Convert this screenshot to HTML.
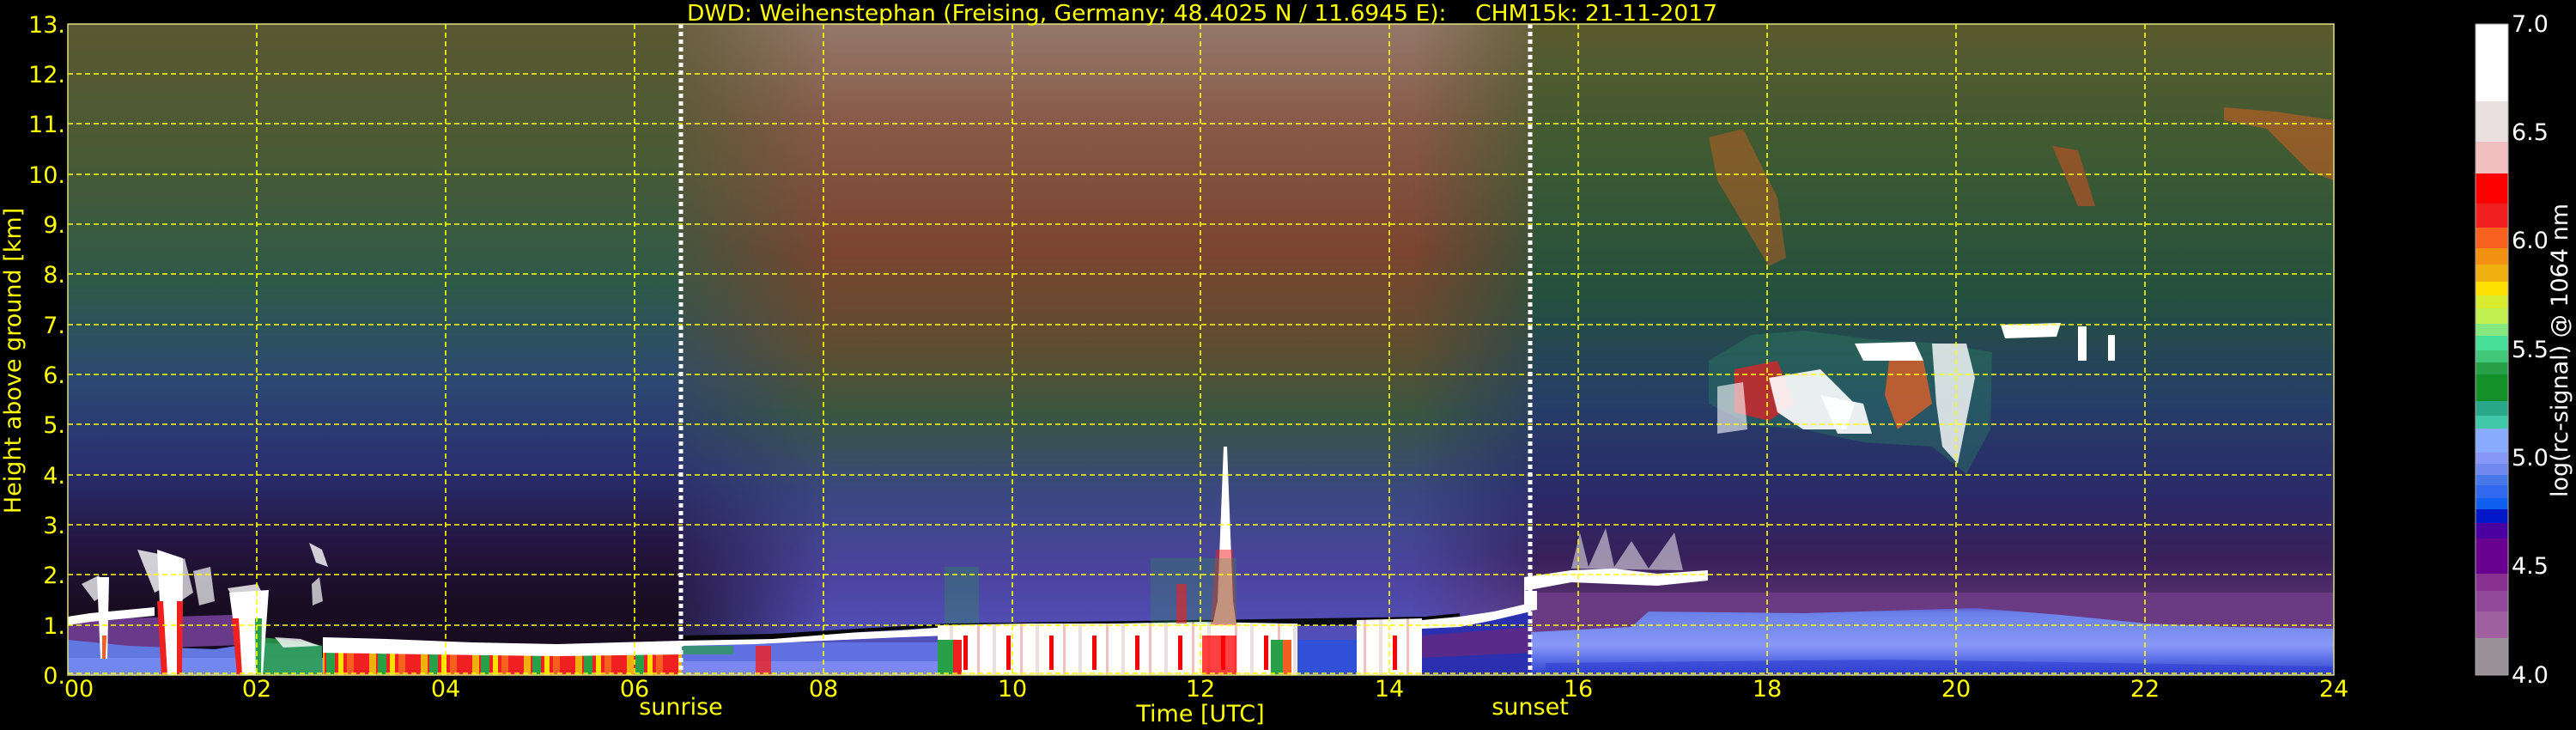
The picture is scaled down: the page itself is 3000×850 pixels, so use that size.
<!DOCTYPE html>
<html><head><meta charset="utf-8"><style>
html,body{margin:0;padding:0;background:#000;}
svg{display:block}
text{font-family:"DejaVu Sans","Liberation Sans",sans-serif;}
</style></head><body>
<svg width="3000" height="850" viewBox="0 0 3000 850" xmlns="http://www.w3.org/2000/svg">
<defs>
<linearGradient id="nightL" x1="0" y1="28" x2="0" y2="786" gradientUnits="userSpaceOnUse">
<stop offset="0" stop-color="#5a5830"/><stop offset="0.2" stop-color="#4a5a35"/>
<stop offset="0.4" stop-color="#2e5a48"/><stop offset="0.55" stop-color="#2c4872"/>
<stop offset="0.68" stop-color="#2a3070"/><stop offset="0.8" stop-color="#241440"/>
<stop offset="0.9" stop-color="#180c20"/><stop offset="1" stop-color="#180c20"/>
</linearGradient>
<linearGradient id="nightR" x1="0" y1="28" x2="0" y2="786" gradientUnits="userSpaceOnUse">
<stop offset="0" stop-color="#5a5a2e"/><stop offset="0.2" stop-color="#3e5a32"/>
<stop offset="0.42" stop-color="#24503e"/><stop offset="0.58" stop-color="#263e68"/>
<stop offset="0.72" stop-color="#2a2a68"/><stop offset="0.82" stop-color="#38205a"/>
<stop offset="0.92" stop-color="#643878"/><stop offset="1" stop-color="#704080"/>
</linearGradient>
<linearGradient id="day" x1="0" y1="28" x2="0" y2="786" gradientUnits="userSpaceOnUse">
<stop offset="0" stop-color="#94786a"/><stop offset="0.15" stop-color="#885a48"/>
<stop offset="0.35" stop-color="#7a4430"/><stop offset="0.5" stop-color="#5e4e30"/>
<stop offset="0.6" stop-color="#3a5640"/><stop offset="0.72" stop-color="#3a4880"/>
<stop offset="0.85" stop-color="#4c44a0"/><stop offset="1" stop-color="#5656c8"/>
</linearGradient>
<linearGradient id="dayMaskG" x1="790" y1="0" x2="1785" y2="0" gradientUnits="userSpaceOnUse">
<stop offset="0" stop-color="#fff" stop-opacity="0.25"/><stop offset="0.18" stop-color="#fff" stop-opacity="1"/>
<stop offset="0.86" stop-color="#fff" stop-opacity="1"/><stop offset="1" stop-color="#fff" stop-opacity="0.25"/>
</linearGradient>
<mask id="dayMask"><rect x="790" y="28" width="995" height="758" fill="url(#dayMaskG)"/></mask>
<linearGradient id="blueL" x1="0" y1="700" x2="0" y2="786" gradientUnits="userSpaceOnUse">
<stop offset="0" stop-color="#4a10a0"/><stop offset="0.15" stop-color="#6a80e8"/>
<stop offset="0.6" stop-color="#8898f8"/><stop offset="1" stop-color="#2a40d0"/>
</linearGradient>
<pattern id="rainbow" x="0" y="0" width="60" height="40" patternUnits="userSpaceOnUse">
<rect width="60" height="40" fill="#f02020"/><rect x="10" width="8" height="40" fill="#f0b010"/>
<rect x="20" width="10" height="40" fill="#28a048"/><rect x="34" width="6" height="40" fill="#ffe000"/>
<rect x="44" width="8" height="40" fill="#f86020"/>
</pattern>
<pattern id="whitered" x="0" y="0" width="50" height="60" patternUnits="userSpaceOnUse">
<rect width="50" height="60" fill="#fff"/><rect x="6" width="4" height="60" fill="#ebe0e0"/>
<rect x="22" y="20" width="5" height="40" fill="#ff0000"/><rect x="38" width="3" height="60" fill="#f0c0c0"/>
</pattern>
</defs>

<rect x="79" y="28" width="1000" height="758" fill="url(#nightL)"/>
<rect x="1079" y="28" width="1639" height="758" fill="url(#nightR)"/>
<rect x="700" y="28" width="1100" height="758" fill="url(#day)" mask="url(#dayMask)"/>

<!-- left bottom -->
<polygon points="79,722 300,715 310,750 79,758" fill="#6a3a8a"/>
<polygon points="79,745 150,752 250,756 300,748 375,752 375,786 79,786" fill="#6078e0"/>
<rect x="79" y="766" width="300" height="20" fill="#7088f0"/>
<polygon points="305,742 360,748 375,752 375,786 305,786" fill="#28a048" opacity="0.85"/>
<polygon points="320,742 350,744 372,752 330,754" fill="#fff" opacity="0.8"/>
<!-- white cloud base line -->
<polygon points="79,718 105,714 180,707 180,717 105,724 79,728" fill="#fff"/>
<!-- blobs 1.5-2.5 km -->
<polygon points="95,680 115,670 125,690 110,700" fill="#fff" opacity="0.75"/>
<polygon points="160,640 185,645 200,680 180,690 170,665" fill="#fff" opacity="0.8"/>
<polygon points="195,660 215,650 225,690 210,700" fill="#fff" opacity="0.7"/>
<polygon points="225,665 245,660 250,700 232,705" fill="#fff" opacity="0.7"/>
<polygon points="265,685 300,680 310,700 280,712" fill="#fff" opacity="0.8"/>
<polygon points="360,632 375,640 382,660 368,655" fill="#fff" opacity="0.8"/>
<polygon points="363,680 372,672 376,700 364,705" fill="#fff" opacity="0.7"/>
<!-- spikes -->
<polygon points="113,672 127,672 125,767 117,767" fill="#fff"/>
<polygon points="119,740 124,740 123,767 119,767" fill="#f06020"/>
<polygon points="183,640 213,650 212,786 190,786" fill="#fff"/>
<polygon points="183,700 190,700 195,786 188,786" fill="#f02020"/>
<polygon points="206,700 213,700 212,786 206,786" fill="#f02020"/>
<polygon points="267,690 313,687 306,786 280,786" fill="#fff"/>
<polygon points="270,720 278,720 282,786 276,786" fill="#f02020"/>
<polygon points="297,720 305,720 304,786 298,786" fill="#28a048"/>
<!-- 02:40-06:30 -->
<rect x="376" y="755" width="418" height="31" fill="url(#rainbow)"/>
<polygon points="376,742 450,744 550,748 650,750 720,748 794,746 794,762 650,764 500,762 376,760" fill="#fff"/>
<!-- 06:30 - 09:20 -->
<rect x="794" y="748" width="310" height="38" fill="#6070e0"/>
<rect x="794" y="770" width="310" height="16" fill="#7a88f0"/>
<polygon points="794,745 880,742 960,738 1050,734 1104,730 1104,740 1050,742 960,746 880,750 794,752" fill="#fff"/>
<rect x="880" y="752" width="18" height="34" fill="#f02020" opacity="0.8"/>
<rect x="794" y="752" width="60" height="10" fill="#28a048" opacity="0.7"/>
<polygon points="794,740 900,738 1000,732 1104,726 1400,722 1660,718 1700,714 1700,726 1400,730 1104,730 1000,736 900,744 794,746" fill="#050508"/>
<!-- 09:20 - 14:24 -->
<polygon points="1092,728 1200,726 1300,726 1400,724 1500,726 1511,726 1511,786 1092,786" fill="url(#whitered)"/>
<polygon points="1580,722 1656,720 1656,786 1580,786" fill="url(#whitered)"/>
<rect x="1511" y="745" width="69" height="41" fill="#3050d8"/>
<rect x="1092" y="745" width="18" height="41" fill="#28a048"/>
<rect x="1110" y="745" width="10" height="41" fill="#f02020"/>
<rect x="1400" y="740" width="40" height="46" fill="#ff0000" opacity="0.75"/>
<rect x="1480" y="745" width="14" height="41" fill="#28a048"/>
<rect x="1494" y="745" width="10" height="41" fill="#f06020"/>
<polygon points="1425,520 1429,520 1436,700 1440,728 1412,728 1418,700" fill="#fff"/>
<polygon points="1416,640 1436,640 1440,728 1410,728" fill="#f02020" opacity="0.5"/>
<rect x="1100" y="660" width="40" height="66" fill="#28a048" opacity="0.3"/>
<rect x="1340" y="650" width="100" height="76" fill="#28a048" opacity="0.25"/>
<rect x="1370" y="680" width="12" height="46" fill="#f02020" opacity="0.6"/>
<!-- 14:24 - 15:30 -->
<polygon points="1656,730 1700,726 1740,718 1783,708 1783,786 1656,786" fill="#2a30b0"/>
<polygon points="1656,740 1783,730 1783,760 1656,766" fill="#5a2a8a"/>
<polygon points="1656,722 1700,718 1740,712 1783,702 1783,712 1740,722 1700,730 1656,732" fill="#fff"/>
<!-- right purple + blue layer -->
<polygon points="1783,690 2718,690 2718,786 1783,786" fill="#6a3a82"/>
<polygon points="1783,736 1900,730 1920,712 2100,714 2300,708 2400,716 2500,726 2600,730 2718,732 2718,786 1783,786" fill="url(#blueL)"/>
<polygon points="1800,772 2200,768 2718,776 2718,786 1800,786" fill="#3040d0" opacity="0.6"/>
<!-- 15:30-17:24 -->
<polygon points="1775,672 1830,664 1880,662 1930,668 1989,664 1989,676 1930,682 1880,680 1830,678 1775,688" fill="#fff"/>
<polygon points="1830,662 1840,620 1850,660 1870,615 1880,660 1900,630 1920,662 1950,620 1960,664" fill="#fff" opacity="0.5"/>
<polygon points="1775,688 1790,688 1790,710 1775,712" fill="#fff"/>
<!-- mid-level clouds -->
<polygon points="1990,420 2040,390 2100,385 2180,395 2260,400 2320,410 2318,500 2290,552 2250,520 2170,515 2100,500 2040,495 1990,470" fill="#2a8a60" opacity="0.35"/>
<polygon points="2020,430 2070,420 2090,470 2060,490 2020,480" fill="#f02020" opacity="0.7"/>
<polygon points="2060,440 2120,430 2160,470 2150,500 2100,500 2070,480" fill="#fff" opacity="0.9"/>
<polygon points="2120,460 2170,470 2180,505 2140,505" fill="#fff" opacity="0.9"/>
<polygon points="2160,400 2230,398 2240,420 2170,420" fill="#fff"/>
<polygon points="2200,420 2240,420 2250,470 2210,500 2195,460" fill="#f86020" opacity="0.7"/>
<polygon points="2250,400 2290,400 2300,440 2280,540 2262,520 2255,470" fill="#fff" opacity="0.8"/>
<polygon points="2330,378 2400,376 2395,392 2335,394" fill="#fff"/>
<rect x="2420" y="380" width="10" height="40" fill="#fff"/>
<rect x="2455" y="390" width="8" height="30" fill="#fff"/>
<polygon points="2000,450 2030,445 2035,500 2000,505" fill="#fff" opacity="0.6"/>
<polygon points="1990,160 2030,150 2070,230 2080,300 2060,310 2030,260 2000,210" fill="#d06020" opacity="0.45"/>
<polygon points="2390,170 2420,175 2440,240 2420,240" fill="#e05020" opacity="0.5"/>
<polygon points="2590,125 2650,130 2718,140 2718,210 2690,200 2640,150 2590,140" fill="#e06020" opacity="0.5"/>

<!-- grid -->
<g stroke="#ffff00" stroke-width="1.6" stroke-dasharray="6,4" fill="none">
<line x1="79" y1="728" x2="2718" y2="728"/><line x1="79" y1="669" x2="2718" y2="669"/>
<line x1="79" y1="611" x2="2718" y2="611"/><line x1="79" y1="553" x2="2718" y2="553"/>
<line x1="79" y1="494" x2="2718" y2="494"/><line x1="79" y1="436" x2="2718" y2="436"/>
<line x1="79" y1="378" x2="2718" y2="378"/><line x1="79" y1="319" x2="2718" y2="319"/>
<line x1="79" y1="261" x2="2718" y2="261"/><line x1="79" y1="203" x2="2718" y2="203"/>
<line x1="79" y1="144" x2="2718" y2="144"/><line x1="79" y1="86" x2="2718" y2="86"/>
<line x1="79" y1="784" x2="2718" y2="784"/>
<line x1="299" y1="28" x2="299" y2="786"/><line x1="519" y1="28" x2="519" y2="786"/>
<line x1="739" y1="28" x2="739" y2="786"/><line x1="959" y1="28" x2="959" y2="786"/>
<line x1="1179" y1="28" x2="1179" y2="786"/><line x1="1398" y1="28" x2="1398" y2="786"/>
<line x1="1618" y1="28" x2="1618" y2="786"/><line x1="1838" y1="28" x2="1838" y2="786"/>
<line x1="2058" y1="28" x2="2058" y2="786"/><line x1="2278" y1="28" x2="2278" y2="786"/>
<line x1="2498" y1="28" x2="2498" y2="786"/>
</g>
<g stroke="#fff" stroke-width="5" stroke-dasharray="5,4">
<line x1="793" y1="28" x2="793" y2="786"/><line x1="1782" y1="28" x2="1782" y2="786"/>
</g>
<rect x="79" y="28" width="2639" height="758" fill="none" stroke="#e0e080" stroke-width="1.5"/>

<g fill="#ffff00" font-size="27" text-anchor="end">
<text x="76" y="796">0.</text><text x="76" y="738">1.</text><text x="76" y="679">2.</text>
<text x="76" y="621">3.</text><text x="76" y="563">4.</text><text x="76" y="504">5.</text>
<text x="76" y="446">6.</text><text x="76" y="388">7.</text><text x="76" y="329">8.</text>
<text x="76" y="271">9.</text><text x="76" y="213">10.</text><text x="76" y="154">11.</text>
<text x="76" y="96">12.</text><text x="76" y="38">13.</text>
</g>
<g fill="#ffff00" font-size="27" text-anchor="middle">
<text x="92" y="811">00</text><text x="299" y="811">02</text><text x="519" y="811">04</text>
<text x="739" y="811">06</text><text x="959" y="811">08</text><text x="1179" y="811">10</text>
<text x="1398" y="811">12</text><text x="1618" y="811">14</text><text x="1838" y="811">16</text>
<text x="2058" y="811">18</text><text x="2278" y="811">20</text><text x="2498" y="811">22</text>
<text x="2718" y="811">24</text>
<text x="793" y="832">sunrise</text><text x="1782" y="832">sunset</text>
<text x="1398" y="840">Time [UTC]</text>
</g>
<text x="800" y="24" fill="#ffff00" font-size="26" textLength="1200" lengthAdjust="spacingAndGlyphs" xml:space="preserve">DWD: Weihenstephan (Freising, Germany; 48.4025 N / 11.6945 E):    CHM15k: 21-11-2017</text>
<text transform="translate(24,420) rotate(-90)" fill="#ffff00" font-size="27" text-anchor="middle">Height above ground [km]</text>

<g>
<rect x="2883" y="28" width="38" height="90" fill="#ffffff"/>
<rect x="2883" y="118" width="38" height="47" fill="#ebe0e0"/>
<rect x="2883" y="165" width="38" height="37" fill="#f0c0c0"/>
<rect x="2883" y="202" width="38" height="35" fill="#ff0000"/>
<rect x="2883" y="237" width="38" height="28" fill="#f02020"/>
<rect x="2883" y="265" width="38" height="24" fill="#f86020"/>
<rect x="2883" y="289" width="38" height="19" fill="#f39010"/>
<rect x="2883" y="308" width="38" height="20" fill="#f0b010"/>
<rect x="2883" y="328" width="38" height="16" fill="#ffe000"/>
<rect x="2883" y="344" width="38" height="15" fill="#d8ec30"/>
<rect x="2883" y="359" width="38" height="18" fill="#c0f050"/>
<rect x="2883" y="377" width="38" height="14" fill="#88e880"/>
<rect x="2883" y="391" width="38" height="17" fill="#48e098"/>
<rect x="2883" y="408" width="38" height="14" fill="#40c878"/>
<rect x="2883" y="422" width="38" height="14" fill="#28a048"/>
<rect x="2883" y="436" width="38" height="31" fill="#149028"/>
<rect x="2883" y="467" width="38" height="17" fill="#28a888"/>
<rect x="2883" y="484" width="38" height="15" fill="#40c8a8"/>
<rect x="2883" y="499" width="38" height="28" fill="#88aaff"/>
<rect x="2883" y="527" width="38" height="13" fill="#8898f8"/>
<rect x="2883" y="540" width="38" height="13" fill="#7088f0"/>
<rect x="2883" y="553" width="38" height="12" fill="#4878e8"/>
<rect x="2883" y="565" width="38" height="15" fill="#3068f0"/>
<rect x="2883" y="580" width="38" height="13" fill="#1060f0"/>
<rect x="2883" y="593" width="38" height="16" fill="#0018c8"/>
<rect x="2883" y="609" width="38" height="18" fill="#4a00a0"/>
<rect x="2883" y="627" width="38" height="41" fill="#6a0090"/>
<rect x="2883" y="668" width="38" height="20" fill="#883090"/>
<rect x="2883" y="688" width="38" height="24" fill="#904898"/>
<rect x="2883" y="712" width="38" height="31" fill="#a060a0"/>
<rect x="2883" y="743" width="38" height="43" fill="#9a9098"/>
<rect x="2883" y="28" width="38" height="758" fill="none" stroke="#aaa" stroke-width="1"/>
</g>
<g fill="#fff" font-size="27">
<text x="2925" y="37">7.0</text><text x="2925" y="163">6.5</text><text x="2925" y="289">6.0</text>
<text x="2925" y="416">5.5</text><text x="2925" y="542">5.0</text><text x="2925" y="668">4.5</text>
<text x="2925" y="795">4.0</text>
</g>
<text transform="translate(2990,408) rotate(-90)" fill="#fff" font-size="27" text-anchor="middle">log(rc-signal) @ 1064 nm</text>
</svg>
</body></html>
